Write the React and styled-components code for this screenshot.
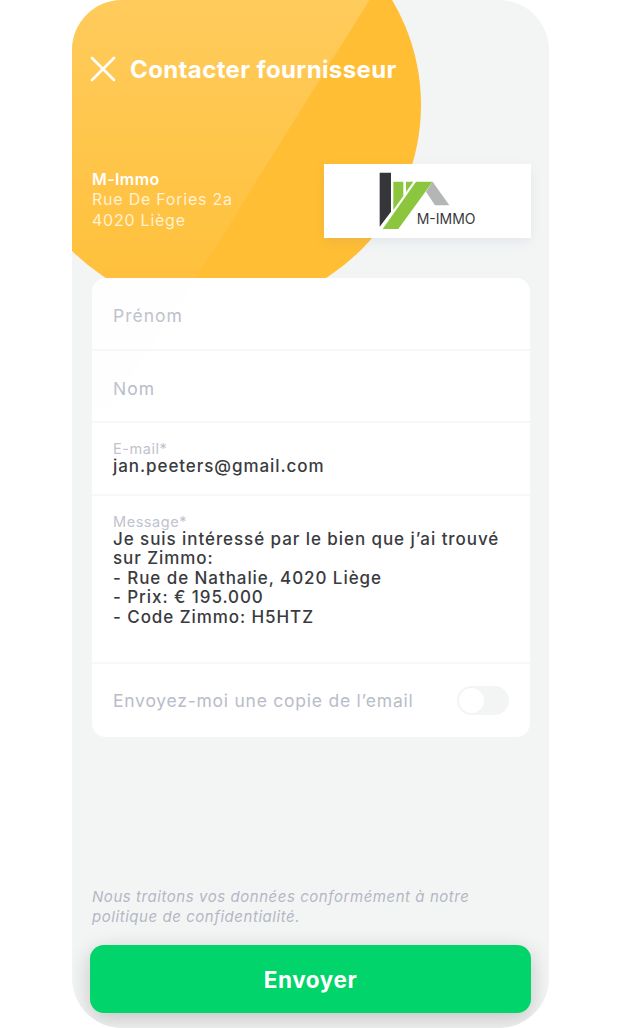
import React from 'react';
import styled, { createGlobalStyle } from 'styled-components';

const GlobalStyle = createGlobalStyle`
  html, body {
    margin: 0;
    padding: 0;
    background: #fff;
  }
  * {
    box-sizing: border-box;
  }
`;

const Phone = styled.main`
  position: relative;
  display: flex;
  flex-direction: column;
  width: 477px;
  height: 1028px;
  margin-left: 72px;
  padding: 0 18px 15px 20px;
  overflow: hidden;
  background: #f3f5f5;
  border-radius: 50px;
  font-family: Inter, "Liberation Sans", sans-serif;
`;

const Blob = styled.div`
  position: absolute;
  left: -61px;
  top: -100px;
  width: 410px;
  height: 410px;
  border-radius: 50%;
  background: #ffbe33;
  overflow: hidden;

  &::after {
    content: '';
    position: absolute;
    inset: 0;
    background: linear-gradient(rgba(255, 255, 255, 0.2) 25%, rgba(255, 255, 255, 0.05) 90%);
    clip-path: polygon(0 0, 421px 0, 165px 410px, 0 410px);
  }
`;

const Header = styled.header`
  position: relative;
  display: flex;
  align-items: center;
  gap: 14px;
  height: 26px;
  margin-top: 56px;
  margin-left: -2px;
`;

const Title = styled.h1`
  margin: 0;
  color: #fff;
  font-size: 24px;
  font-weight: 700;
  letter-spacing: 0.38px;
`;

const Supplier = styled.section`
  position: relative;
  display: flex;
  align-items: center;
  justify-content: space-between;
  margin-top: 82px;
  height: 74px;
`;

const Address = styled.p`
  margin: 0 0 3px;
  color: rgba(255, 255, 255, 0.78);
  font-size: 16px;
  line-height: 20.5px;
  letter-spacing: 0.76px;

  strong {
    display: block;
    color: #fff;
    font-weight: 600;
    letter-spacing: 0.4px;
  }
`;

const LogoCard = styled.div`
  width: 207px;
  height: 74px;
  background: #fff;
  box-shadow: 0 4px 10px rgba(120, 130, 150, 0.12);

  svg {
    display: block;
  }
`;

const Form = styled.form`
  position: relative;
  display: flex;
  flex-direction: column;
  margin: 40px 1px 0 0;
  background: #fff;
  border-radius: 14px;
  overflow: hidden;

  &::before {
    content: '';
    position: absolute;
    inset: 0;
    background: rgba(243, 245, 245, 0.12);
    clip-path: polygon(0 0, 105px 0, 18px 130px, 0 130px);
  }
`;

const Row = styled.div`
  display: flex;
  flex-direction: column;
  justify-content: ${(p) => (p.$top ? 'flex-start' : 'center')};
  height: ${(p) => p.$height}px;
  padding: ${(p) => (p.$top ? '17px' : '4px')} 21px 0;
  border-bottom: 2px solid #f6f7f7;

  &:last-child {
    border-bottom: 0;
  }
`;

const ToggleRow = styled(Row)`
  flex-direction: row;
  align-items: center;
  justify-content: space-between;
  padding-top: 0;
`;

const Placeholder = styled.span`
  color: #b9bcc9;
  font-size: 17.5px;
  letter-spacing: ${(p) => (p.$tight ? 0.76 : 1)}px;
`;

const Label = styled.span`
  color: #c0c3ce;
  font-size: 14.5px;
  line-height: 17px;
  letter-spacing: 0.55px;
`;

const Value = styled.span`
  color: #3a3b3f;
  font-size: 17px;
  font-weight: 500;
  line-height: 19.4px;
  letter-spacing: 0.93px;
  white-space: pre-line;
`;

const Switch = styled.span`
  display: flex;
  align-items: center;
  width: 52px;
  height: 29px;
  padding: 2px;
  background: #f3f5f5;
  border-radius: 15px;

  &::before {
    content: '';
    width: 25px;
    height: 25px;
    background: #fff;
    border-radius: 50%;
  }
`;

const Spacer = styled.div`
  flex: 1;
`;

const Notice = styled.p`
  margin: 0 0 19px;
  color: #b5b7c4;
  font-size: 15px;
  font-style: italic;
  line-height: 19.5px;
  letter-spacing: 0.55px;
`;

const SendButton = styled.button`
  height: 68px;
  margin-left: -2px;
  border: 0;
  border-radius: 14px;
  background: #00d46a;
  box-shadow: 0 6px 22px rgba(0, 0, 0, 0.2);
  color: #fff;
  font-family: inherit;
  font-size: 22.5px;
  font-weight: 700;
  letter-spacing: 0.6px;
`;

function CloseIcon() {
  return (
    <svg width="26" height="26" viewBox="0 0 26 26" fill="none" stroke="#fff" strokeWidth="2.6" strokeLinecap="round">
      <path d="M2 2 L24 24 M24 2 L2 24" />
    </svg>
  );
}

function Logo() {
  return (
    <svg width="207" height="74" viewBox="42 42 621 222">
      <path fill="#35363a" d="M209 68 H243 V185 L209 230 Z" />
      <path fill="#8cc63f" d="M250 95 H280 V138 L250 180 Z" />
      <path fill="#8cc63f" d="M288 95 H310 L288 126 Z" />
      <path fill="#8cc63f" d="M318 95 H368 L265 237 H218 Z" />
      <path fill="#b4b5b5" d="M368 95 L418 166 H375 L348 125 Z" />
      <text x="320" y="221" fill="#3a3a3c" fontFamily="Inter, sans-serif" fontSize="42">M-IMMO</text>
    </svg>
  );
}

export default function App() {
  return (
    <>
      <GlobalStyle />
      <Phone>
        <Blob />
        <Header>
          <CloseIcon />
          <Title>Contacter fournisseur</Title>
        </Header>
        <Supplier>
          <Address>
            <strong>M-Immo</strong>
            Rue De Fories 2a
            <br />
            4020 Liège
          </Address>
          <LogoCard>
            <Logo />
          </LogoCard>
        </Supplier>
        <Form>
          <Row $height={73}>
            <Placeholder>Prénom</Placeholder>
          </Row>
          <Row $height={72}>
            <Placeholder>Nom</Placeholder>
          </Row>
          <Row $height={73} $top>
            <Label>E-mail*</Label>
            <Value>jan.peeters@gmail.com</Value>
          </Row>
          <Row $height={168} $top>
            <Label>Message*</Label>
            <Value>
              {'Je suis intéressé par le bien que j’ai trouvé\nsur Zimmo:\n- Rue de Nathalie, 4020 Liège\n- Prix: € 195.000\n- Code Zimmo: H5HTZ'}
            </Value>
          </Row>
          <ToggleRow $height={73}>
            <Placeholder $tight>Envoyez-moi une copie de l’email</Placeholder>
            <Switch />
          </ToggleRow>
        </Form>
        <Spacer />
        <Notice>
          Nous traitons vos données conformément à notre
          <br />
          politique de confidentialité.
        </Notice>
        <SendButton type="button">Envoyer</SendButton>
      </Phone>
    </>
  );
}
